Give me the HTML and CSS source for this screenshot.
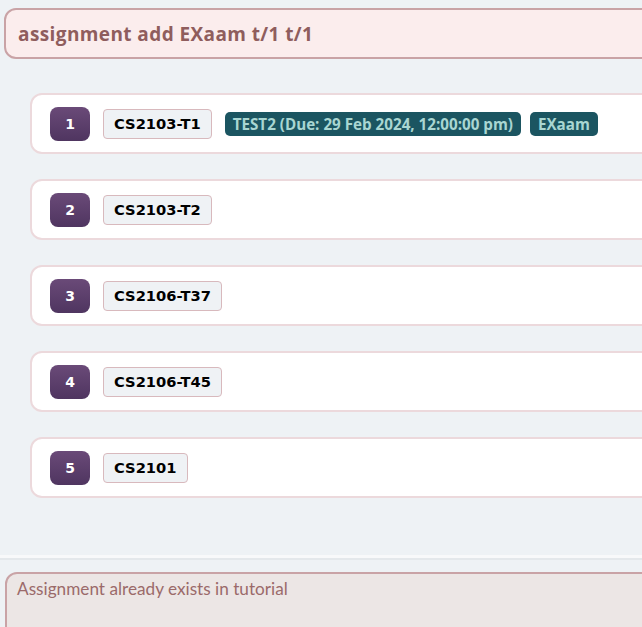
FILE: index.html
```html
<!DOCTYPE html>
<html>
<head>
<meta charset="utf-8">
<link rel="stylesheet" href="styles.css">
</head>
<body>
<div class="app">
  <div class="command-wrap">
    <div class="command">assignment add EXaam t/1 t/1</div>
  </div>
  <div class="list">
    <div class="card">
      <div class="num">1</div>
      <div class="code">CS2103-T1</div>
      <div class="tag">TEST2 (Due: 29 Feb 2024, 12:00:00 pm)</div>
      <div class="tag">EXaam</div>
    </div>
    <div class="card">
      <div class="num">2</div>
      <div class="code">CS2103-T2</div>
    </div>
    <div class="card">
      <div class="num">3</div>
      <div class="code">CS2106-T37</div>
    </div>
    <div class="card">
      <div class="num">4</div>
      <div class="code">CS2106-T45</div>
    </div>
    <div class="card">
      <div class="num">5</div>
      <div class="code">CS2101</div>
    </div>
  </div>
  <div class="divider"></div>
  <div class="result-wrap">
    <div class="result">Assignment already exists in tutorial</div>
  </div>
</div>
</body>
</html>
```
FILE: styles.css
```css
html, body {
  margin: 0;
  padding: 0;
  background: #eef2f5;
  overflow: hidden;
}
.app {
  width: 642px;
  height: 627px;
  display: flex;
  flex-direction: column;
  font-family: Lato, "Open Sans", sans-serif;
  overflow: hidden;
}
.command-wrap {
  flex-shrink: 0;
  padding: 8px 0 0 4px;
  height: 60px;
  box-sizing: border-box;
}
.command {
  width: 680px;
  height: 51px;
  box-sizing: border-box;
  border: 2px solid #c9a3a6;
  border-radius: 12px;
  background: #fbeded;
  color: #8f5d5d;
  font-family: "Open Sans", sans-serif;
  font-weight: 700;
  font-size: 19px;
  letter-spacing: 0.4px;
  padding: 0 0 0 12px;
  line-height: 48px;
}
.list {
  flex-shrink: 0;
  padding: 33px 0 0 30px;
  display: flex;
  flex-direction: column;
  gap: 25px;
  height: 495px;
  box-sizing: border-box;
}
.card {
  width: 660px;
  height: 61px;
  flex-shrink: 0;
  box-sizing: border-box;
  border: 2px solid #ecd9dc;
  border-radius: 12px;
  background: #ffffff;
  display: flex;
  align-items: center;
  padding-left: 18px;
  gap: 13px;
}
.num {
  width: 40px;
  height: 34px;
  border-radius: 8px;
  background: linear-gradient(#6a4a78, #4f3560);
  color: #fff;
  font-family: "DejaVu Sans", Verdana, sans-serif;
  font-weight: 700;
  font-size: 14px;
  display: flex;
  align-items: center;
  justify-content: center;
}
.code {
  height: 30px;
  box-sizing: border-box;
  border: 1.5px solid #d8b9bd;
  border-radius: 4px;
  background: #eff2f5;
  color: #000;
  font-family: "DejaVu Sans", Verdana, sans-serif;
  font-weight: 700;
  font-size: 14.7px;
  padding: 0 10px;
  display: flex;
  align-items: center;
}
.tag {
  height: 24px;
  border-radius: 5px;
  background: #1b5561;
  color: #a9d6d2;
  font-family: "Open Sans", sans-serif;
  font-weight: 700;
  font-size: 15.2px;
  padding: 0 8px;
  display: flex;
  align-items: center;
  margin-right: -4px;
}
.divider {
  flex-shrink: 0;
  height: 3px;
  background: #f8f9fa;
  border-bottom: 2px solid #e4e8eb;
}
.result-wrap {
  padding: 12px 0 0 5px;
  flex: 1;
}
.result {
  width: 680px;
  height: 80px;
  box-sizing: border-box;
  border: 2px solid #c9a3a6;
  border-radius: 12px;
  background: #ece6e5;
  color: #9b6a6a;
  font-size: 17.2px;
  padding: 4px 0 0 10px;
}
```
